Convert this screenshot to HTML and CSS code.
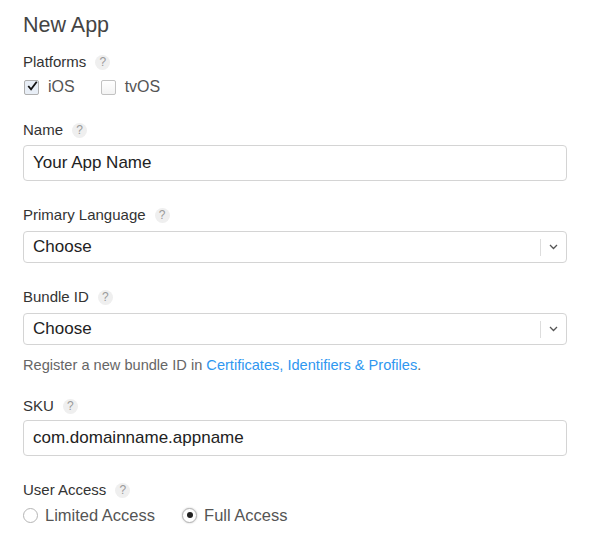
FILE: index.html
```html
<!DOCTYPE html>
<html lang="en">
<head>
    <meta charset="UTF-8">
    <title>New App</title>
    <link rel="stylesheet" href="styles.css">
</head>
<body>
    <div class="new-app">
        <h1 class="title">New App</h1>

        <div class="field field-platforms">
            <div class="field-label">Platforms <span class="help">?</span></div>
            <div class="option-row checks">
                <label class="option">
                    <span class="checkbox checked">
                        <svg width="13" height="12" viewBox="0 0 13 12"><path d="M1.5 6 L4.8 10 L11.5 1" fill="none" stroke="#111" stroke-width="2.1"/></svg>
                    </span>
                    iOS
                </label>
                <label class="option">
                    <span class="checkbox"></span>
                    tvOS
                </label>
            </div>
        </div>

        <div class="field">
            <div class="field-label">Name <span class="help">?</span></div>
            <div class="text-input">Your App Name</div>
        </div>

        <div class="field">
            <div class="field-label label-select">Primary Language <span class="help">?</span></div>
            <div class="select">
                <span class="select-value">Choose</span>
                <span class="select-arrow">
                    <svg width="9" height="6" viewBox="0 0 9 6"><path d="M1 1 L4.5 4.5 L8 1" fill="none" stroke="#555" stroke-width="1.3"/></svg>
                </span>
            </div>
        </div>

        <div class="field field-bundle">
            <div class="field-label label-select">Bundle ID <span class="help">?</span></div>
            <div class="select">
                <span class="select-value">Choose</span>
                <span class="select-arrow">
                    <svg width="9" height="6" viewBox="0 0 9 6"><path d="M1 1 L4.5 4.5 L8 1" fill="none" stroke="#555" stroke-width="1.3"/></svg>
                </span>
            </div>
            <p class="hint">Register a new bundle ID in <a href="#">Certificates, Identifiers &amp; Profiles</a>.</p>
        </div>

        <div class="field">
            <div class="field-label label-sku">SKU <span class="help">?</span></div>
            <div class="text-input">com.domainname.appname</div>
        </div>

        <div class="field">
            <div class="field-label">User Access <span class="help">?</span></div>
            <div class="option-row">
                <label class="option option-radio">
                    <span class="radio"></span>
                    Limited Access
                </label>
                <label class="option option-radio">
                    <span class="radio selected"></span>
                    Full Access
                </label>
            </div>
        </div>
    </div>
</body>
</html>
```

FILE: styles.css
```css
:root {
    --text-color: #333;
    --muted-color: #555;
    --border-color: #d4d4d4;
    --link-color: #2f97f0;
}

* {
    margin: 0;
    padding: 0;
    box-sizing: border-box;
    font-family: 'Liberation Sans', Arial, sans-serif;
}

body {
    background: #fff;
    color: var(--text-color);
}

.new-app {
    padding: 11px 23px 0 23px;
}

.title {
    font-size: 21.5px;
    font-weight: normal;
    line-height: 28px;
    color: #444;
    margin-bottom: 13px;
}

.field {
    margin-bottom: 24px;
}

.field-platforms {
    margin-bottom: 23px;
}

.field-bundle {
    margin-bottom: 21px;
}

.field-label {
    display: flex;
    align-items: center;
    font-size: 15px;
    line-height: 20px;
    color: #333;
    margin-bottom: 5px;
}

.label-select {
    margin-bottom: 6px;
}

.label-sku {
    margin-bottom: 4px;
}

.help {
    display: inline-flex;
    align-items: center;
    justify-content: center;
    width: 15px;
    height: 15px;
    margin-left: 9px;
    border-radius: 50%;
    background: #efefef;
    color: #9a9a9a;
    font-size: 12px;
}

.option-row {
    display: flex;
    gap: 27px;
    height: 20px;
    align-items: center;
}

.option-row.checks {
    gap: 25px;
}

.option {
    display: flex;
    align-items: center;
    gap: 9px;
    font-size: 16px;
    color: var(--muted-color);
}

.option-radio {
    gap: 7px;
    font-size: 16.5px;
}

.checkbox {
    display: flex;
    align-items: center;
    justify-content: center;
    width: 15px;
    height: 15px;
    margin-left: 1px;
    border: 1px solid #c2c2c2;
    border-radius: 2px;
    background: linear-gradient(#fff, #f3f3f3);
}

.checkbox.checked {
    background: #e8eef6;
    border-color: #b0b0b0;
}

.checkbox svg {
    margin-top: -3px;
    margin-left: 2px;
}

.radio {
    width: 15px;
    height: 15px;
    border: 1px solid #b5b5b5;
    border-radius: 50%;
    background: #fff;
    position: relative;
}

.radio.selected {
    box-shadow: 0 0 2px rgba(0,0,0,0.25);
}

.radio.selected::after {
    content: '';
    position: absolute;
    top: 3.5px;
    left: 3.5px;
    width: 6px;
    height: 6px;
    border-radius: 50%;
    background: #222;
}

.text-input {
    height: 36px;
    border: 1px solid var(--border-color);
    border-radius: 4px;
    padding: 0 9px;
    display: flex;
    align-items: center;
    font-size: 17px;
    color: #222;
}

.select {
    height: 32px;
    border: 1px solid var(--border-color);
    border-radius: 4px;
    display: flex;
    align-items: center;
}

.select-value {
    flex-grow: 1;
    padding-left: 9px;
    font-size: 17px;
    color: #222;
}

.select-arrow {
    display: flex;
    align-items: center;
    justify-content: center;
    width: 26px;
    height: 17px;
    border-left: 1px solid #ddd;
}

.hint {
    margin-top: 10px;
    font-size: 14.6px;
    line-height: 20px;
    color: #666;
}

.hint a {
    color: var(--link-color);
    text-decoration: none;
}
```
